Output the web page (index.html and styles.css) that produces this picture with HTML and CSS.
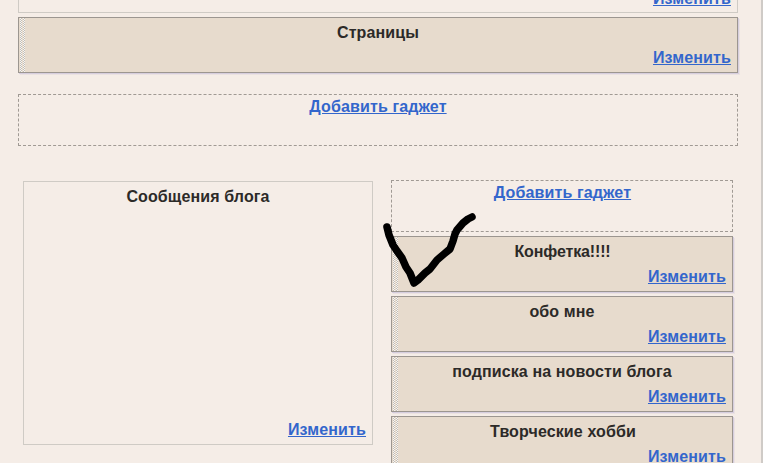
FILE: index.html
```html
<!DOCTYPE html>
<html lang="ru">
<head>
<meta charset="utf-8">
<title>Макет</title>
<link rel="stylesheet" href="styles.css">
</head>
<body>
<div class="page">
  <section class="top">
    <div class="box box-clipped"><a class="edit" href="#">Изменить</a></div>
    <div class="widget wide">
      <div class="title">Страницы</div>
      <a class="edit" href="#">Изменить</a>
    </div>
    <div class="add add-wide"><a class="add-link" href="#">Добавить гаджет</a></div>
  </section>
  <section class="cols">
    <div class="box main">
      <div class="title">Сообщения блога</div>
      <a class="edit" href="#">Изменить</a>
    </div>
    <div class="side">
      <div class="add add-side"><a class="add-link" href="#">Добавить гаджет</a></div>
      <div class="widget">
        <div class="title title-tight">Конфетка!!!!</div>
        <a class="edit" href="#">Изменить</a>
      </div>
      <div class="widget">
        <div class="title">обо мне</div>
        <a class="edit" href="#">Изменить</a>
      </div>
      <div class="widget">
        <div class="title">подписка на новости блога</div>
        <a class="edit" href="#">Изменить</a>
      </div>
      <div class="widget">
        <div class="title title-shift">Творческие хобби</div>
        <a class="edit" href="#">Изменить</a>
      </div>
    </div>
  </section>
  <svg class="scribble" width="100" height="80" viewBox="0 0 100 80" aria-hidden="true">
    <path d="M7 17 L9 25 L13 35 L17 41 L22 48 L26 57 L30 63 L34 73 L38 70 L45 63 L50 59 L57 50 L64 44 L70 39 L73 31 L75 24 L77 20 L83 13 L88 9 L92 7"/>
  </svg>
</div>
</body>
</html>
```
FILE: styles.css
```css
html, body {
  margin: 0;
  padding: 0;
  height: 100%;
  background: #fff;
  overflow: hidden;
}
.page {
  position: relative;
  box-sizing: border-box;
  width: 763px;
  height: 463px;
  background: #f5ede7;
  border-right: 2px solid #cfcbc7;
  overflow: hidden;
  font-family: "Liberation Sans", Arial, sans-serif;
  font-size: 16px;
  font-weight: bold;
  color: #2c2a28;
}
.top {
  display: flex;
  flex-direction: column;
  margin: -40px 0 0 18px;
  width: 720px;
}
.box {
  box-sizing: border-box;
  display: flex;
  flex-direction: column;
  border: 1px solid #cfcbc5;
}
.box-clipped {
  height: 53px;
  justify-content: flex-end;
  padding: 0 0 4px;
  margin-bottom: 4px;
}
.widget {
  box-sizing: border-box;
  display: flex;
  flex-direction: column;
  flex: none;
  height: 56px;
  border: 1px solid #9c9690;
  background-color: #e7dbcd;
  background-image:
    repeating-conic-gradient(#c2beb8 0 25%, #f8f5f1 0 50%),
    repeating-conic-gradient(#c2beb8 0 25%, #f8f5f1 0 50%);
  background-size: 2px 2px;
  background-position: 1px 0, 4px 0;
  background-repeat: repeat-y;
  background-clip: padding-box;
  padding-top: 6px;
  box-shadow: 1px 1px 0 #d6cede, 2px 2px 0 #ebe2e2;
}
.title {
  text-align: center;
  line-height: 18px;
  letter-spacing: 0.12px;
}
.title-tight {
  letter-spacing: -0.14px;
  padding-left: 1px;
}
.title-shift {
  padding-left: 2px;
}
.edit, .add-link {
  color: #3366cc;
  text-decoration: underline;
  line-height: 18px;
  letter-spacing: 0.13px;
}
.edit {
  align-self: flex-end;
  margin: 7px 6px 0 0;
}
.box-clipped .edit {
  margin-top: 0;
}
.add {
  box-sizing: border-box;
  border: 1px dashed #a09a94;
  text-align: center;
}
.add-wide {
  height: 52px;
  margin-top: 21px;
  padding-top: 3px;
}
.cols {
  display: flex;
  align-items: flex-start;
  gap: 18px;
  margin: 34px 0 0 23px;
}
.main {
  width: 350px;
  height: 264px;
  margin-top: 1px;
  padding: 6px 0 5px;
}
.main .edit {
  margin-top: auto;
  margin-right: 6px;
}
.side {
  display: flex;
  flex-direction: column;
  gap: 4px;
  width: 342px;
}
.add-side {
  height: 52px;
  padding: 3px 0 0 1px;
}
.scribble {
  position: absolute;
  left: 380px;
  top: 210px;
  overflow: visible;
}
.scribble path {
  fill: none;
  stroke: #000;
  stroke-width: 7.5;
  stroke-linecap: round;
  stroke-linejoin: round;
}
```
